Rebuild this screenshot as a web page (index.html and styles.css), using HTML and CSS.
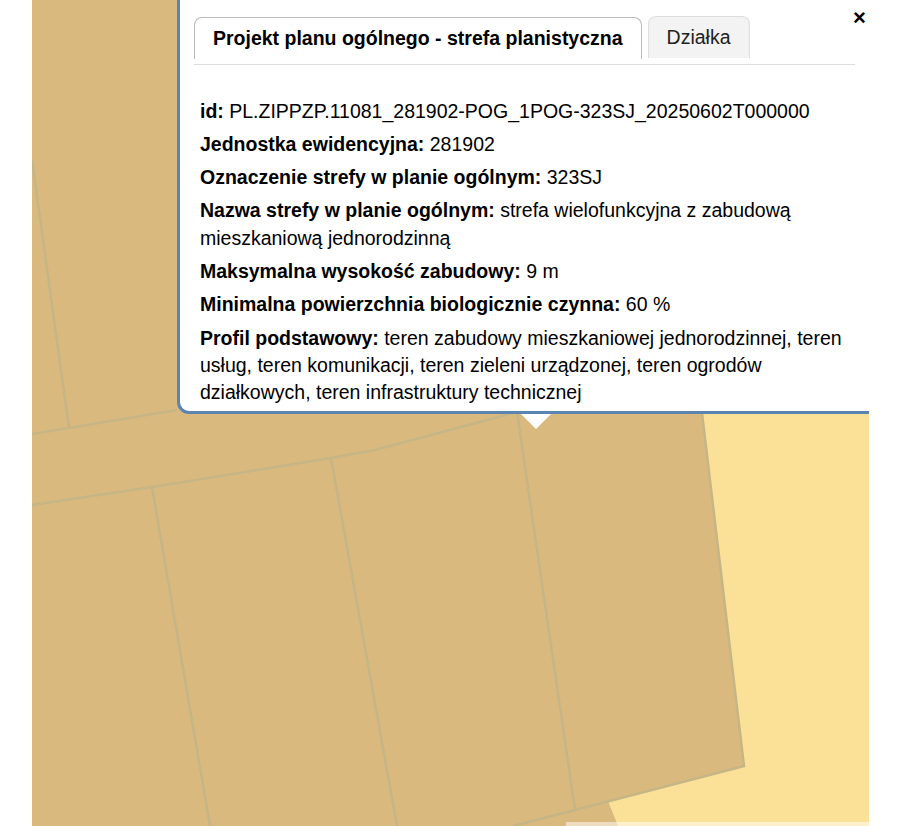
FILE: index.html
```html
<html lang="pl">
<head>
    <meta charset="UTF-8">
    <title>Projekt planu ogólnego</title>
    <link rel="stylesheet" href="styles.css">
</head>
<body>
    <div class="map">
        <svg class="map-layer" viewBox="32 0 837 826" width="837" height="826">
            <rect class="zone-yellow" x="32" y="0" width="837" height="826"/>
            <polygon class="zone-tan" points="32,0 690,0 702,413 744,766 608,801 618,826 32,826"/>
            <g class="parcels">
                <polyline points="32,160 69,428"/>
                <polyline points="32,434 69,428 177,410"/>
                <polyline points="32,505 152,487 331,458 375,450 517,412"/>
                <polyline points="152,487 210,826"/>
                <polyline points="331,458 397,826"/>
                <polyline points="517,412 575,810"/>
                <polyline points="702,413 744,766 575,810 513,826"/>
            </g>
        </svg>
        <div class="attribution"></div>

        <div class="popup">
            <span class="popup-close">×</span>
            <div class="tabs">
                <div class="tab tab-active">Projekt planu ogólnego - strefa planistyczna</div>
                <div class="tab">Działka</div>
            </div>
            <div class="info">
                <p><b>id:</b> PL.ZIPPZP.11081_281902-POG_1POG-323SJ_20250602T000000</p>
                <p><b>Jednostka ewidencyjna:</b> 281902</p>
                <p><b>Oznaczenie strefy w planie ogólnym:</b> 323SJ</p>
                <p><b>Nazwa strefy w planie ogólnym:</b> strefa wielofunkcyjna z zabudową mieszkaniową jednorodzinną</p>
                <p><b>Maksymalna wysokość zabudowy:</b> 9 m</p>
                <p><b>Minimalna powierzchnia biologicznie czynna:</b> 60 %</p>
                <p><b>Profil podstawowy:</b> teren zabudowy mieszkaniowej jednorodzinnej, teren usług, teren komunikacji, teren zieleni urządzonej, teren ogrodów działkowych, teren infrastruktury technicznej</p>
            </div>
        </div>
        <div class="popup-tip"></div>
    </div>
</body>
</html>
```

FILE: styles.css
```css
html, body {
    margin: 0;
    height: 826px;
    overflow: hidden;
    background-color: #fff;
    font-family: "Liberation Sans", Arial, sans-serif;
}
.map {
    position: relative;
    width: 837px;
    height: 826px;
    margin-left: 32px;
    overflow: hidden;
}
.map-layer {
    position: absolute;
    left: 0;
    top: 0;
    display: block;
}
.zone-yellow {
    fill: #fbe197;
}
.zone-tan {
    fill: #dab97f;
}
.parcels polyline {
    fill: none;
    stroke: #c6b585;
    stroke-width: 2.5;
}
.attribution {
    position: absolute;
    left: 534px;
    right: 0;
    bottom: 0;
    height: 4px;
    background-color: rgba(255, 255, 255, 0.5);
}
.popup {
    position: absolute;
    left: 145px;
    top: -20px;
    width: 720px;
    height: 434px;
    box-sizing: border-box;
    padding: 33px 39px 0 14px;
    background-color: #fff;
    border: 3px solid #5b84b1;
    border-radius: 12px;
    color: #000;
}
.popup-close {
    position: absolute;
    left: 673px;
    top: 22px;
    font-size: 22px;
    line-height: 26px;
    font-weight: bold;
    color: #000;
}
.popup-tip {
    position: absolute;
    left: 489px;
    top: 414px;
    width: 0;
    height: 0;
    border-left: 15px solid transparent;
    border-right: 15px solid transparent;
    border-top: 15px solid #fff;
}
.tabs {
    display: flex;
    align-items: flex-start;
    gap: 6px;
    height: 48px;
    border-bottom: 1px solid #ddd;
}
.tab {
    box-sizing: border-box;
    height: 42px;
    padding: 0 18px;
    line-height: 40px;
    font-size: 19.5px;
    color: #222;
    background-color: #f3f3f3;
    border: 1px solid #ddd;
    border-bottom: none;
    border-radius: 8px 8px 0 0;
}
.tab-active {
    margin-top: 1px;
    font-weight: bold;
    color: #000;
    background-color: #fff;
    border-color: #bbb;
}
.info {
    padding: 32.6px 6px 0;
    font-size: 19.5px;
    line-height: 27.3px;
}
.info p {
    margin: 0 0 6px;
}
```
